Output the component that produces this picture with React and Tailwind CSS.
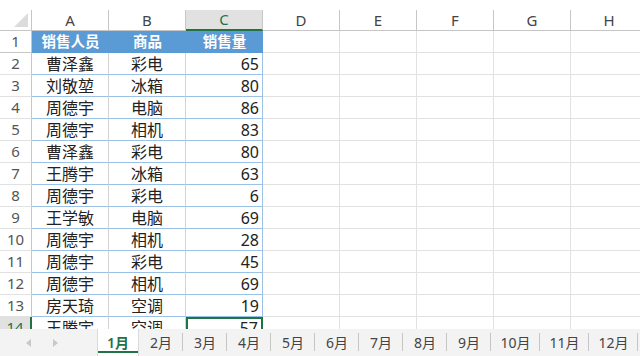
import React from "react";

const rows = [
  ["曹泽鑫", "彩电", 65],
  ["刘敬堃", "冰箱", 80],
  ["周德宇", "电脑", 86],
  ["周德宇", "相机", 83],
  ["曹泽鑫", "彩电", 80],
  ["王腾宇", "冰箱", 63],
  ["周德宇", "彩电", 6],
  ["王学敏", "电脑", 69],
  ["周德宇", "相机", 28],
  ["周德宇", "彩电", 45],
  ["周德宇", "相机", 69],
  ["房天琦", "空调", 19],
  ["王腾宇", "空调", 57],
];

const emptyCols = ["D", "E", "F", "G", "H"];
const months = ["1月", "2月", "3月", "4月", "5月", "6月", "7月", "8月", "9月", "10月", "11月", "12月"];

const font = { fontFamily: '"Noto Sans", "Noto Sans CJK SC", sans-serif' };

function EmptyCells() {
  return emptyCols.map((c) => (
    <div key={c} className="w-[77px] shrink-0 border-r border-b border-[#e1e1e1]" />
  ));
}

function DataRow({ n, row }) {
  const last = n === 14;
  return (
    <div className="flex h-[22px] shrink-0">
      <div
        className={`w-[32px] shrink-0 flex items-center justify-center text-[15px] border-b border-[#e1e1e1] ${
          last ? "bg-[#e1e1e1] text-[#217346] border-r-2 border-r-[#217346]" : "text-[#555] border-r border-r-[#c6c6c6]"
        }`}
      >
        {n}
      </div>
      <div className="w-[77px] shrink-0 flex items-center justify-center text-[16px] text-[#222] border-r border-r-[#d4d4d4] border-b border-b-[#9bc2e6]">
        {row[0]}
      </div>
      <div className="w-[77px] shrink-0 flex items-center justify-center text-[16px] text-[#222] border-r border-r-[#d4d4d4] border-b border-b-[#9bc2e6]">
        {row[1]}
      </div>
      <div
        className={`w-[77px] shrink-0 flex items-center justify-end pr-[3px] text-[16px] text-[#222] ${
          last ? "border-2 border-[#217346]" : "border-r border-r-[#9bc2e6] border-b border-b-[#9bc2e6]"
        }`}
      >
        {row[2]}
      </div>
      <EmptyCells />
    </div>
  );
}

export default function App() {
  return (
    <div className="w-[640px] h-[356px] bg-white overflow-hidden flex flex-col" style={font}>
      <div className="h-[10px] shrink-0" />
      <div className="flex-1 overflow-hidden flex flex-col">
        {/* column headers */}
        <div className="flex h-[21px] shrink-0">
          <div className="w-[32px] shrink-0 border-r border-b border-[#c6c6c6] relative">
            <svg className="absolute right-[3px] bottom-[3px]" width="14" height="14" viewBox="0 0 14 14">
              <polygon points="14,0 14,14 0,14" fill="#dcdcdc" />
            </svg>
          </div>
          {["A", "B", "C", ...emptyCols].map((c) => (
            <div
              key={c}
              className={`w-[77px] shrink-0 flex items-center justify-center text-[15px] ${
                c === "C"
                  ? "bg-[#e1e1e1] text-[#217346] border-r border-r-[#c6c6c6] border-b-2 border-b-[#217346]"
                  : "text-[#444] border-r border-b border-[#c6c6c6]"
              }`}
            >
              {c}
            </div>
          ))}
        </div>
        {/* table header row */}
        <div className="flex h-[22px] shrink-0">
          <div className="w-[32px] shrink-0 flex items-center justify-center text-[15px] text-[#555] border-r border-b border-[#c6c6c6]">
            1
          </div>
          <div className="w-[231px] shrink-0 flex bg-[#5b9bd5] text-white font-bold text-[14.5px]">
            <div className="w-[77px] flex items-center justify-center">销售人员</div>
            <div className="w-[77px] flex items-center justify-center">商品</div>
            <div className="w-[77px] flex items-center justify-center">销售量</div>
          </div>
          <EmptyCells />
        </div>
        {rows.map((r, i) => (
          <DataRow key={i} n={i + 2} row={r} />
        ))}
      </div>
      {/* sheet tabs */}
      <div className="h-[27px] shrink-0 bg-[#f3f3f3] flex items-stretch text-[14px] text-[#444]">
        <div className="w-[97px] shrink-0 flex items-center pl-[26px] gap-[22px]">
          <svg width="5" height="8" viewBox="0 0 5 8">
            <polygon points="5,0 5,8 0,4" fill="#c8c8c8" />
          </svg>
          <svg width="5" height="8" viewBox="0 0 5 8">
            <polygon points="0,0 0,8 5,4" fill="#c8c8c8" />
          </svg>
        </div>
        {months.map((m, i) =>
          i === 0 ? (
            <div
              key={m}
              className="w-[42px] shrink-0 bg-white flex items-center justify-center border-x border-[#dadada] text-[#217346] font-semibold relative"
            >
              {m}
              <div className="absolute left-0 right-0 bottom-[3px] h-[2px] bg-[#217346]" />
            </div>
          ) : (
            <div key={m} className={`${m.length > 2 ? "w-[49px]" : "w-[44px]"} shrink-0 flex items-center justify-center relative`}>
              {m}
              <div className="absolute right-0 top-[4px] bottom-[5px] w-px bg-[#c6c6c6]" />
            </div>
          )
        )}
      </div>
    </div>
  );
}
